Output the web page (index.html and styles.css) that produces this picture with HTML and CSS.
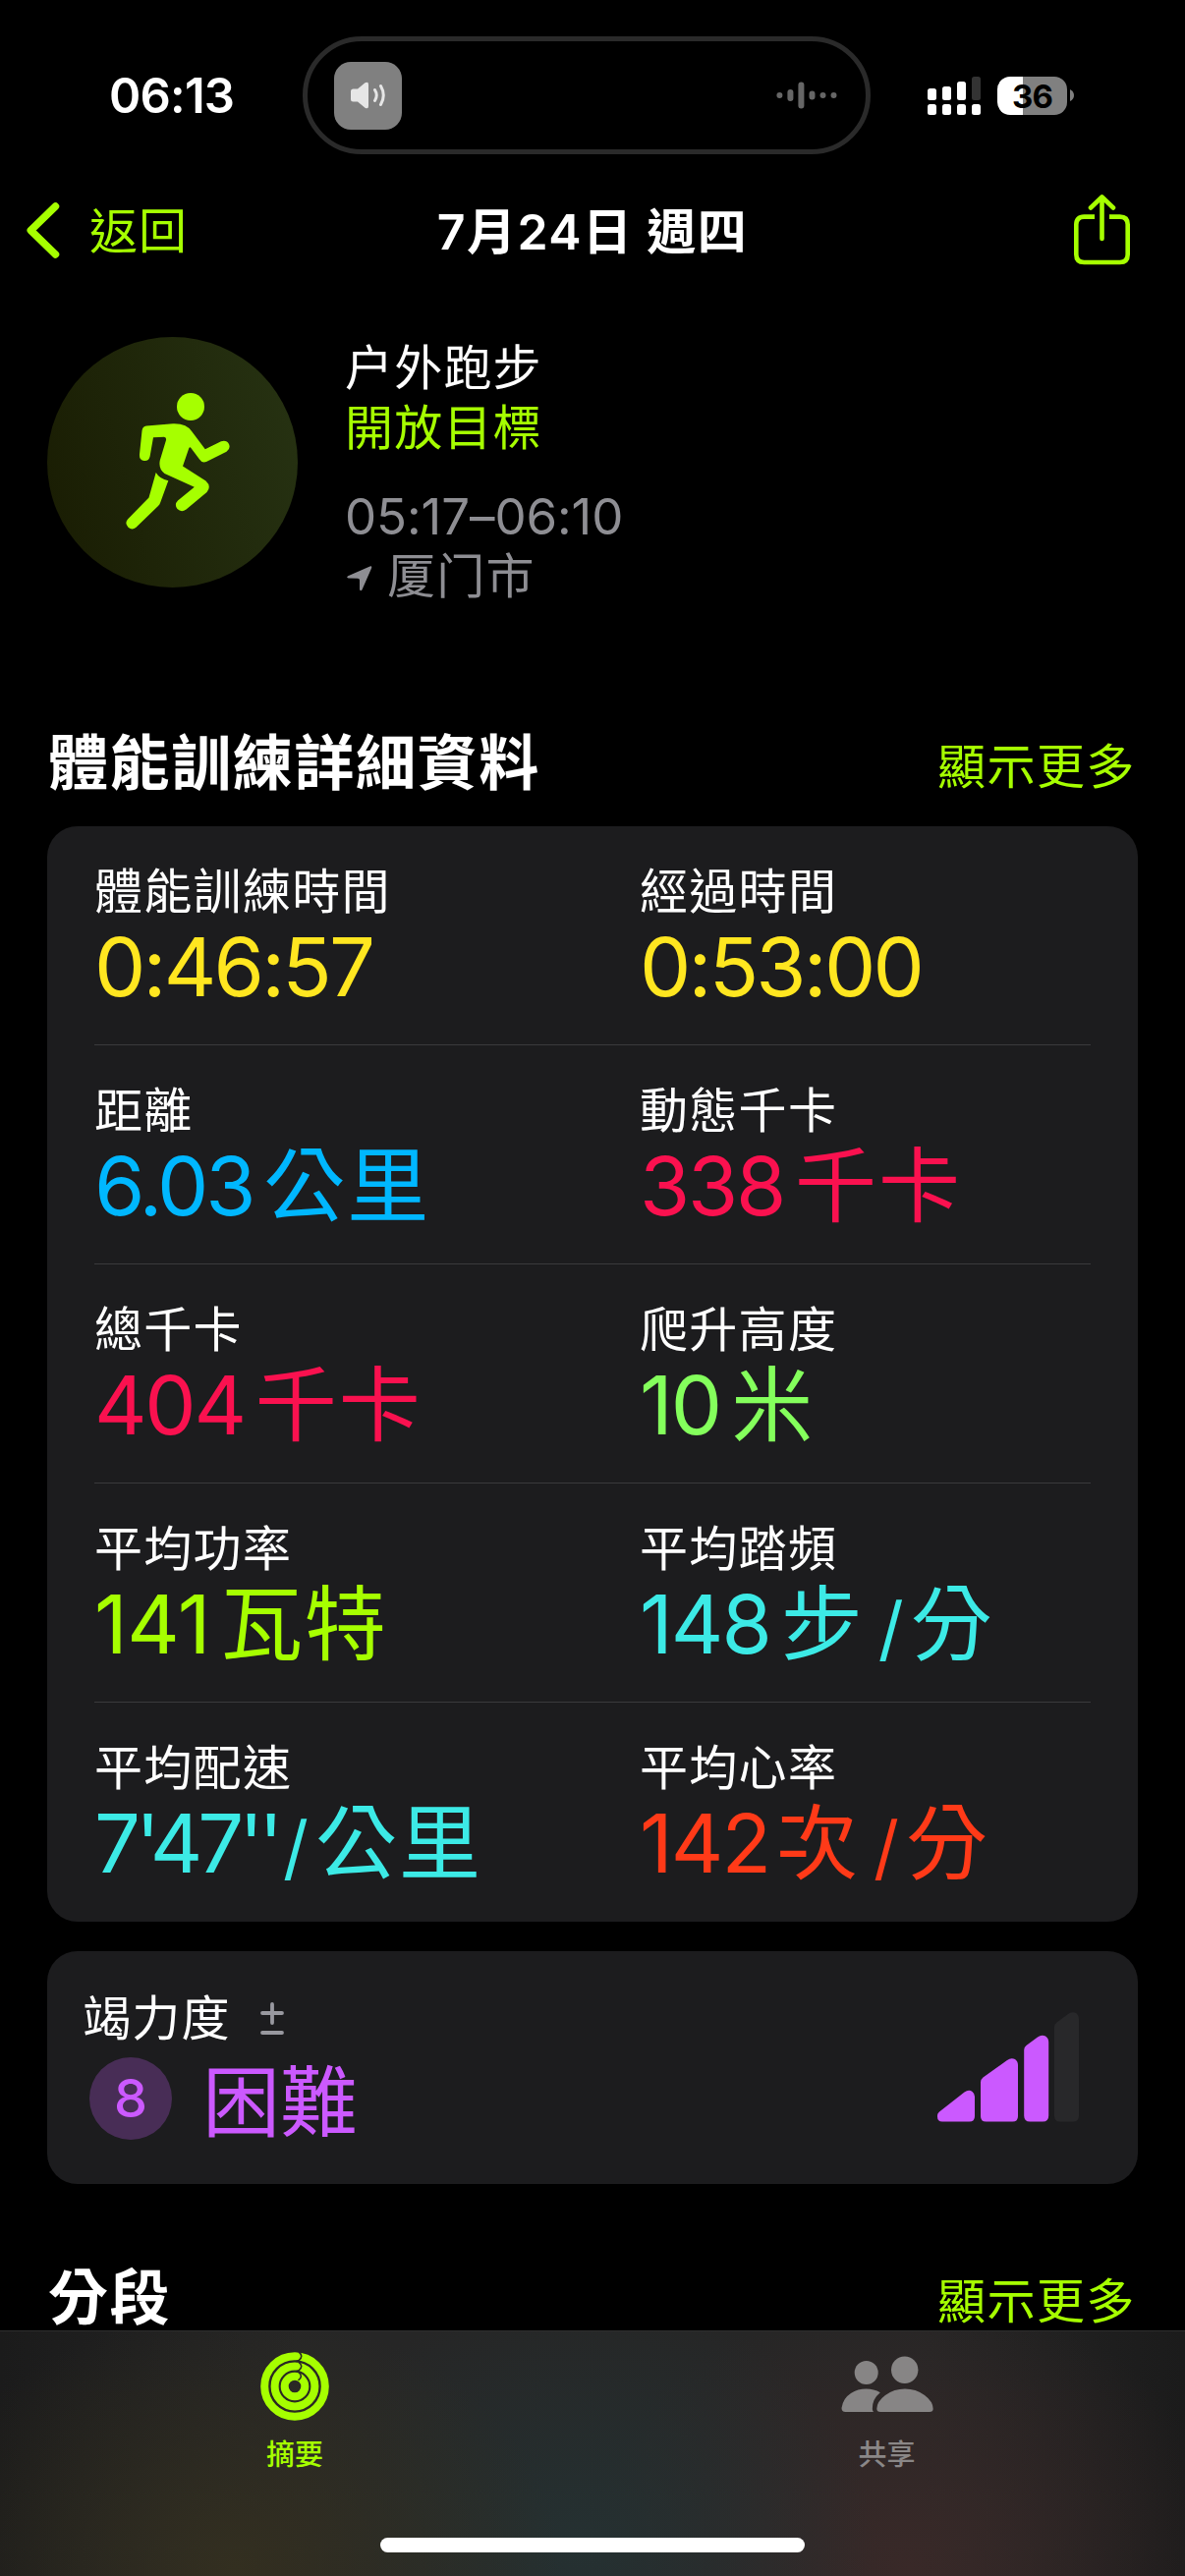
FILE: index.html
```html
<!DOCTYPE html>
<html lang="zh-Hant">
<head>
<meta charset="utf-8">
<title>體能訓練</title>
<link rel="stylesheet" href="styles.css">
</head>
<body>
<div class="screen">
  <header class="status">
    <div class="clock">06:13</div>
    <div class="island">
      <div class="speaker">
        <svg width="36" height="28" viewBox="0 0 36 28"><path d="M2.500 7.500H7L14.500 1.300Q18 -.5 18 3V25Q18 28.500 14.500 26.700L7 20.500H2.500Q0 20.500 0 18V10Q0 7.500 2.500 7.500Z" fill="#e6e6e6"/><path d="M24.500 8.500Q28 14 24.500 19.500M30.500 4.500Q36 14 30.500 23.500" fill="none" stroke="#e6e6e6" stroke-width="3" stroke-linecap="round"/></svg>
      </div>
      <svg class="wave" width="62" height="28" viewBox="0 0 62 28" stroke="#666" stroke-width="6" stroke-linecap="round"><path d="M3.400 13.900v.2M14.400 11v6M25.400 3.500v21M36.500 12.500v3M47.500 13.900v.2M58.500 13.900v.2"/></svg>
    </div>
    <svg class="signal" width="54" height="39" viewBox="0 0 54 39" fill="#fff"><rect y="12" width="9" height="12" rx="2.500"/><rect x="15" y="10" width="9" height="14" rx="2.500"/><rect x="30" y="5" width="9" height="19" rx="2.500"/><rect x="45" width="9" height="24" rx="2.500" fill="#333"/><rect y="28" width="9" height="11" rx="2.500"/><rect x="15" y="28" width="9" height="11" rx="2.500"/><rect x="30" y="28" width="9" height="11" rx="2.500"/><rect x="45" y="28" width="9" height="11" rx="2.500"/></svg>
    <div class="battery">36</div>
    <svg class="nub" width="4" height="12" viewBox="0 0 4 12"><path d="M0 0Q4 2 4 6T0 12Z" fill="#808080"/></svg>
  </header>

  <nav class="nav">
    <div class="back">
      <svg width="34" height="57" viewBox="0 0 34 57"><path d="M29.500 4L4.300 28.500L29.500 53" fill="none" stroke="#a6ff00" stroke-width="7.500" stroke-linecap="round" stroke-linejoin="round"/></svg>
      <span>返回</span>
    </div>
    <h1 class="title">7月24日 週四</h1>
    <svg class="share" width="57" height="72" viewBox="0 0 57 72" fill="none" stroke="#a6ff00" stroke-width="4.600" stroke-linecap="round" stroke-linejoin="round"><path d="M28.500 45V3M17 13.500L28.500 2.500L40 13.500"/><path stroke-linecap="butt" d="M21 22.600H10.300Q2.300 22.600 2.300 30.600V61Q2.300 69 10.300 69H46.700Q54.700 69 54.700 61V30.600Q54.700 22.600 46.700 22.600H36"/></svg>
  </nav>

  <section class="workout">
    <div class="avatar">
      <svg width="255" height="255" viewBox="0 0 255 255" fill="#a6ff00">
        <circle cx="146" cy="71" r="14"/>
        <path d="M101 90.600L128 88.300Q142 87.800 147.500 96.500L160.800 114.300L177 106.300Q182.500 104.500 185 109Q187 114 182.500 116.800L162 127Q157.500 128.600 155 124.500L146 112.500Q144.600 111.500 144 114L138 131.500L161.500 146.500Q167.500 152 162.500 158L141.500 175.500Q136.500 179 132.500 175Q129 170.500 133 166.500L149.800 152.800L119.500 139Q113 134 114.800 125.500L121 105Q121.500 102 119 101.800L108 102.200L104.600 121.500Q103.500 126.500 98.700 126Q93.500 125 94 119.500L96.500 95.500Q97 91 101 90.600Z"/>
        <path d="M110.700 138Q114.500 144.500 123.300 146.300L115.200 168.500Q114.500 170.500 113 172L90.500 193.800Q86.500 197 82.500 193.800Q78.500 189.500 82 185.500L103.500 163.500Z"/>
      </svg>
    </div>
    <div class="facts">
      <div class="name" lang="zh-Hans">户外跑步</div>
      <div class="goal">開放目標</div>
      <div class="when">05:17–06:10</div>
      <div class="place" lang="zh-Hans"><svg width="26" height="26" viewBox="0 0 26 26"><path d="M23.500 .5Q26 -.3 25 2.500L15.500 24.200Q14 26.500 13 24V14.500Q13 12.700 11 12.700L1.500 12.500Q-1 11.800 1.200 10.300Z" fill="#8e8e93"/></svg><span>厦门市</span></div>
    </div>
  </section>

  <div class="heading"><h2>體能訓練詳細資料</h2><a class="more">顯示更多</a></div>

  <section class="card metrics">
    <div class="row">
      <div class="metric"><div class="label">體能訓練時間</div><div class="value time yellow">0:46:57</div></div>
      <div class="metric"><div class="label">經過時間</div><div class="value time yellow">0:53:00</div></div>
    </div>
    <div class="row">
      <div class="metric"><div class="label">距離</div><div class="value distance blue">6.03<span class="unit">公里</span></div></div>
      <div class="metric"><div class="label">動態千卡</div><div class="value energy pink">338<span class="unit">千卡</span></div></div>
    </div>
    <div class="row">
      <div class="metric"><div class="label">總千卡</div><div class="value energy pink">404<span class="unit">千卡</span></div></div>
      <div class="metric"><div class="label">爬升高度</div><div class="value green">10<span class="unit">米</span></div></div>
    </div>
    <div class="row">
      <div class="metric"><div class="label">平均功率</div><div class="value power lime">141<span class="unit">瓦特</span></div></div>
      <div class="metric"><div class="label">平均踏頻</div><div class="value rate cyan">148<span class="unit">步</span><span class="slash">/</span><span class="unit">分</span></div></div>
    </div>
    <div class="row">
      <div class="metric"><div class="label">平均配速</div><div class="value pace cyan">7'47''<span class="slash">/</span><span class="unit">公里</span></div></div>
      <div class="metric"><div class="label">平均心率</div><div class="value rate heart red">142<span class="unit">次</span><span class="slash">/</span><span class="unit">分</span></div></div>
    </div>
  </section>

  <section class="card effort">
    <div class="effort-text">
      <div class="effort-label"><span>竭力度</span><svg width="24" height="34" viewBox="0 0 24 34"><path d="M2 11H22M12 2V21M2 31H22" stroke="#98989f" stroke-width="3.800" stroke-linecap="round"/></svg></div>
      <div class="effort-value"><span class="score">8</span><span class="level">困難</span></div>
    </div>
    <svg class="bars" width="144" height="112" viewBox="0 0 144 112" fill="#cb59ff">
      <path d="M2 101.500L27.500 81.500Q32 78.500 35.500 81Q38 83 38 86V106Q38 111.500 32.500 111.500H5Q0 111.500 0 106.500V105Q0 103 2 101.500Z"/>
      <path d="M46.500 66.500L71 49Q75 46 79 48Q82 50 82 54V106Q82 111.500 76.500 111.500H49.500Q44 111.500 44 106V71.500Q44 68.500 46.500 66.500Z"/>
      <path d="M90.500 34L102 25.500Q106 22.500 110 24.500Q113.200 26.500 113.200 30.500V105.500Q113.200 111.500 107.200 111.500H94.200Q88.200 111.500 88.200 105.500V38.500Q88.200 35.500 90.500 34Z"/>
      <path fill="#28282a" d="M121.500 10.500L133 2Q137 -1 141 1Q144 3 144 7V105.500Q144 111.500 138 111.500H125Q119 111.500 119 105.500V15.500Q119 12.500 121.500 10.500Z"/>
    </svg>
  </section>

  <div class="heading splits"><h2>分段</h2><a class="more">顯示更多</a></div>

  <footer class="tabbar">
    <div class="tabs">
      <div class="tab active">
        <svg width="70" height="70" viewBox="-35 -35 70 70" fill="none" stroke="#a6ff00" stroke-width="8"><circle r="30.800"/><circle r="20.400"/><circle r="10.300"/><path stroke="#282826" stroke-width="1.600" d="M4 -35.200Q9.500 -30.800 4 -26.400L1 -25.500M4 -24.600Q9.500 -20.400 4 -16.200L1 -15.300M4 -14.400Q9 -10.300 3.500 -6.100"/></svg>
        <span>摘要</span>
      </div>
      <div class="tab">
        <svg width="94" height="70" viewBox="0 0 94 70" fill="#878585"><circle cx="25.700" cy="21.900" r="12"/><circle cx="64.700" cy="19.200" r="13.700"/><path d="M25.500 38.600Q33.500 38.600 39.800 42.200Q31.500 49 31.800 59Q32 61 33 62H4.500Q.5 62 .5 58Q2 48 10 43Q17 38.600 25.500 38.600Z"/><path d="M65 38.600Q76 38.600 85 45Q93.700 51.500 93.700 59Q93.500 62 90 62H40Q36.500 62 36.300 59Q36.300 51.500 45 45Q54 38.600 65 38.600Z"/></svg>
        <span>共享</span>
      </div>
    </div>
    <div class="home"></div>
  </footer>
</div>
</body>
</html>
```
FILE: styles.css
```css
* { box-sizing: border-box; }
body {
  margin: 0;
  background: #000;
  color: #fff;
  font-family: Inter, "Noto Sans CJK TC", sans-serif;
}
[lang="zh-Hans"] { font-family: Inter, "Noto Sans CJK SC", sans-serif; }
svg { display: block; flex: none; }
h1, h2 { margin: 0; }

.screen {
  width: 1206px;
  height: 2622px;
  display: flex;
  flex-direction: column;
  overflow: hidden;
}

/* Status bar */
.status {
  height: 157px;
  padding: 37px 0 0 111px;
  display: flex;
  align-items: center;
  flex: none;
}
.clock {
  width: 197px;
  padding-top: 2px;
  font-size: 49px;
  font-weight: 600;
  line-height: 60px;
  letter-spacing: -0.8px;
}
.island {
  width: 578px;
  height: 120px;
  border: 5px solid #2a2a2a;
  border-radius: 60px;
  padding: 0 29px 0 27px;
  display: flex;
  align-items: center;
  justify-content: space-between;
}
.speaker {
  width: 69px;
  height: 69px;
  border-radius: 17px;
  background: #808080;
  display: flex;
  align-items: center;
  padding-left: 17px;
}
.signal { margin-left: 58px; }
.battery {
  margin-left: 17px;
  width: 71px;
  height: 39px;
  border-radius: 13px;
  background: linear-gradient(90deg, #fff 26px, #808080 26px);
  color: #000;
  font-size: 33px;
  font-weight: 700;
  line-height: 40px;
  text-align: center;
  letter-spacing: -0.8px;
}
.nub { margin-left: 3px; }

/* Navigation bar */
.nav {
  height: 154px;
  padding: 0 56px 0 27px;
  display: grid;
  grid-template-columns: 1fr auto 1fr;
  align-items: center;
  flex: none;
}
.back {
  display: flex;
  align-items: center;
  gap: 30px;
  color: #a6ff00;
  font-size: 49px;
  line-height: 60px;
  letter-spacing: 1px;
}
.back span { padding-top: 3px; }
.title {
  font-size: 50px;
  font-weight: 600;
  line-height: 60px;
  letter-spacing: 1.400px;
  margin-left: 29px;
  padding-top: 3px;
}
.share { justify-self: end; }

/* Workout summary */
.workout {
  height: 425px;
  padding: 32px 48px 0;
  display: flex;
  gap: 48px;
  flex: none;
}
.avatar {
  width: 255px;
  height: 255px;
  border-radius: 50%;
  background: linear-gradient(75deg, #191c02, #273313);
}
.facts {
  padding-top: 1px;
  font-size: 49px;
  line-height: 61px;
  letter-spacing: 1.200px;
}
.goal { color: #a6ff00; }
.when { margin-top: 29px; color: #8e8e93; font-size: 51px; letter-spacing: -0.1px; }
.place { display: flex; align-items: center; gap: 15px; color: #8e8e93; }
.place svg { margin: 5px 0 0 2px; }

/* Section headings */
.heading {
  height: 105px;
  padding: 5px 52px 0 49px;
  display: flex;
  justify-content: space-between;
  flex: none;
}
.heading h2 {
  font-size: 61px;
  font-weight: 700;
  line-height: 72px;
  letter-spacing: 1.600px;
}
.more {
  color: #a6ff00;
  font-size: 49px;
  line-height: 72px;
  letter-spacing: 1.500px;
  margin: 4px -2px 0 0;
}
.splits { height: 149px; padding-top: 84px; }
.splits h2, .splits .more { line-height: 64px; }

/* Cards */
.card {
  margin: 0 48px;
  background: #1c1c1e;
  border-radius: 31px;
  flex: none;
}
.metrics { height: 1115px; }
.row {
  height: 223px;
  display: grid;
  grid-template-columns: 555px 1fr;
  margin: 0 48px;
  border-bottom: 1px solid #3a3a3c;
}
.row:last-child { border-bottom: 0; }
.metric { padding-top: 37px; }
.label {
  font-size: 49px;
  line-height: 60px;
  letter-spacing: 1.300px;
}
.value {
  font-size: 83px;
  line-height: 93px;
  letter-spacing: -2px;
  white-space: nowrap;
}
.unit { font-size: 83px; letter-spacing: 2px; margin-left: 11px; }
.slash {
  display: inline-block;
  font-size: 72px;
  line-height: 80px;
  margin-left: 14px;
}
.time { letter-spacing: -2.800px; }
.distance { letter-spacing: -3.200px; }
.energy { letter-spacing: -2.300px; }
.power { letter-spacing: -0.5px; }
.rate .slash + .unit { margin-left: 9px; }
.heart .unit { margin-left: 7px; }
.pace { letter-spacing: -5px; }
.pace .slash { margin-left: 5px; letter-spacing: -2px; }
.pace .unit { margin-left: 9px; }
.yellow { color: #ffe620; }
.blue { color: #00b7ff; }
.pink { color: #fa114f; }
.green { color: #84ff5c; }
.lime { color: #a6ff00; }
.cyan { color: #3ceae6; }
.red { color: #ff3a18; }

/* Effort card */
.effort {
  height: 237px;
  margin-top: 30px;
  padding: 0 60px 0 36px;
  display: flex;
  justify-content: space-between;
}
.effort-text { padding-top: 39px; }
.effort-label {
  display: flex;
  align-items: center;
  gap: 30px;
  font-size: 49px;
  line-height: 60px;
  letter-spacing: 1.300px;
}
.effort-value {
  display: flex;
  align-items: center;
  gap: 31px;
  padding: 9px 0 0 7px;
  color: #cb59ff;
}
.score {
  width: 84px;
  height: 84px;
  border-radius: 50%;
  background: #482d56;
  font-size: 54px;
  font-weight: 500;
  line-height: 84px;
  text-align: center;
}
.level { font-size: 79px; line-height: 84px; padding-top: 4px; margin-bottom: -4px; }
.bars { margin-top: 62px; }

/* Tab bar */
.tabbar {
  height: 250px;
  flex: none;
  border-top: 1px solid #2e2e2e;
  background:
    radial-gradient(ellipse 330px 260px at 240px 240px, #332f20, #332f2000),
    radial-gradient(ellipse 300px 260px at 590px 220px, #253132, #25313200),
    radial-gradient(ellipse 330px 280px at 925px 240px, #392928, #39292800),
    linear-gradient(90deg, #1b1b1b, #262626 25%, #262626 78%, #1b1b1b);
}
.tabs { display: grid; grid-template-columns: 1fr 1fr; height: 210px; }
.tab {
  display: flex;
  flex-direction: column;
  align-items: center;
  padding-top: 21px;
  gap: 15px;
  color: #8a8787;
  font-size: 29px;
  font-weight: 500;
  line-height: 40px;
}
.tab.active { color: #a6ff00; }
.tab:first-child { padding-right: 3px; }
.tab:last-child { padding-right: 4px; }
.tab:last-child svg { margin-top: -1px; margin-bottom: 1px; }
.home {
  width: 432px;
  height: 15px;
  border-radius: 8px;
  background: #fff;
  margin: 0 auto;
}
```
